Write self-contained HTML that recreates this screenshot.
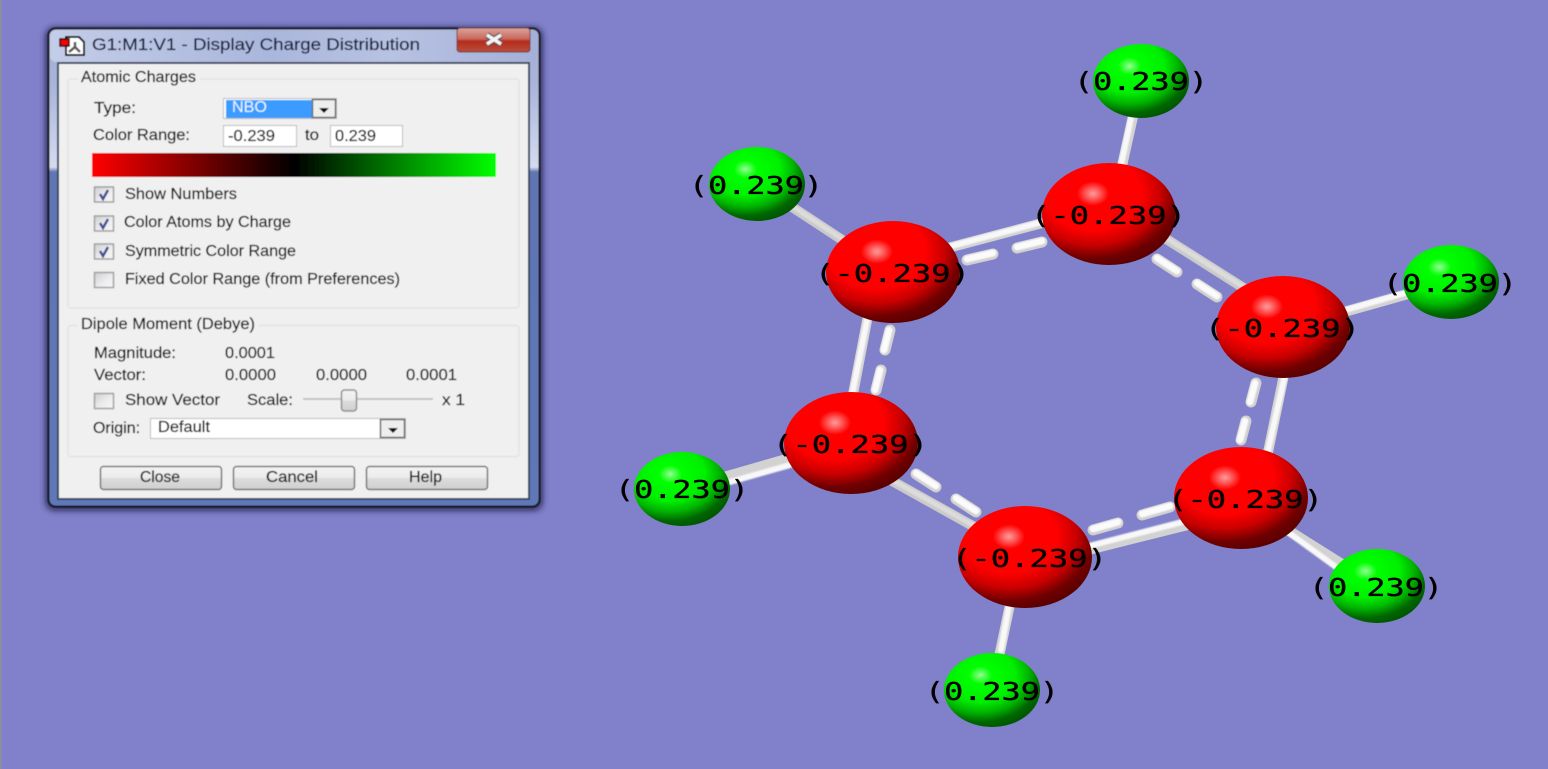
<!DOCTYPE html>
<html><head><meta charset="utf-8"><title>G1:M1:V1 - Display Charge Distribution</title>
<style>
html,body{margin:0;padding:0;background:#8080cb;width:1548px;height:769px;overflow:hidden}
svg{display:block;position:absolute;left:0;top:0}
.t{font-family:"Liberation Sans",sans-serif;font-size:15.5px;fill:#111;stroke:#111;stroke-width:.22}
.l{font-family:"DejaVu Sans Mono","Liberation Mono",monospace;font-size:24.5px;fill:#050000;stroke:#050000;stroke-width:.35}
</style></head><body>
<svg width="1548" height="769" viewBox="0 0 1548 769" xmlns="http://www.w3.org/2000/svg">
<defs>
<radialGradient id="r" cx=".38" cy=".3" r=".8">
<stop offset="0" stop-color="#ff9c9c"/><stop offset=".05" stop-color="#ff6a6a"/><stop offset=".15" stop-color="#f00"/><stop offset=".45" stop-color="#f00"/><stop offset=".63" stop-color="#c80000"/><stop offset=".79" stop-color="#6e0000"/><stop offset=".92" stop-color="#580000"/><stop offset="1" stop-color="#500000"/>
</radialGradient>
<radialGradient id="g" cx=".38" cy=".3" r=".8">
<stop offset="0" stop-color="#9cff9c"/><stop offset=".05" stop-color="#60ff60"/><stop offset=".15" stop-color="#0f0"/><stop offset=".45" stop-color="#00f000"/><stop offset=".63" stop-color="#00b400"/><stop offset=".79" stop-color="#006600"/><stop offset=".92" stop-color="#005400"/><stop offset="1" stop-color="#005000"/>
</radialGradient>
<linearGradient id="bar"><stop offset="0" stop-color="#f00"/><stop offset=".5" stop-color="#000"/><stop offset="1" stop-color="#0f0"/></linearGradient>
<linearGradient id="glass" x1="0" y1="0" x2="0" y2="1">
<stop offset="0" stop-color="#a3aed4"/><stop offset=".12" stop-color="#a9b5da"/><stop offset=".29" stop-color="#d5dcf0"/><stop offset=".3" stop-color="#6076b4"/><stop offset="1" stop-color="#5f78b8"/>
</linearGradient>
<linearGradient id="title" x1="0" y1="0" x2="1" y2="0">
<stop offset="0" stop-color="#c4cde8"/><stop offset=".45" stop-color="#aab6dc"/><stop offset=".7" stop-color="#b8c2e2"/><stop offset="1" stop-color="#a4b0d8"/>
</linearGradient>
<linearGradient id="red" x1="0" y1="0" x2="0" y2="1">
<stop offset="0" stop-color="#dca49c"/><stop offset=".45" stop-color="#c9695e"/><stop offset=".55" stop-color="#b52b1a"/><stop offset="1" stop-color="#b8503e"/>
</linearGradient>
<linearGradient id="btn" x1="0" y1="0" x2="0" y2="1">
<stop offset="0" stop-color="#f4f4f4"/><stop offset=".48" stop-color="#ebebeb"/><stop offset=".52" stop-color="#dcdcdc"/><stop offset="1" stop-color="#cfcfcf"/>
</linearGradient>
<linearGradient id="cb" x1="0" y1="0" x2="1" y2="1">
<stop offset="0" stop-color="#cfcfd4"/><stop offset=".6" stop-color="#eeeeef"/><stop offset="1" stop-color="#f7f7f7"/>
</linearGradient>
<filter id="soft" x="-5%" y="-5%" width="110%" height="110%"><feGaussianBlur stdDeviation=".45"/></filter>
<filter id="sh" x="-10%" y="-10%" width="120%" height="120%"><feGaussianBlur stdDeviation="3.5"/></filter>
<filter id="b1" x="-20%" y="-20%" width="140%" height="140%"><feGaussianBlur stdDeviation=".7"/></filter>
</defs>

<rect x="0" y="0" width="1.5" height="769" fill="#8e9296"/>

<!-- bonds -->
<g fill="none" stroke-linecap="round">
<g stroke="#c9c9c9" stroke-width="10">
<path d="M757 184L850 245"/><path d="M1160 235L1250 292"/><path d="M980 530L885 477"/>
</g>
<g stroke="#dcdcdc" stroke-width="5" filter="url(#b1)">
<path d="M757 183L850 244"/><path d="M1160 234L1250 291"/><path d="M980 529L885 476"/>
</g>
<g stroke="#d2d2d2" stroke-width="10">
<path d="M1141 81L1120 175"/><path d="M1451 282L1330 316"/><path d="M682 489L800 455"/><path d="M1377 586L1280 525"/><path d="M992 690L1012 595"/>
<path d="M948 248L1050 221"/><path d="M1287 360L1266 462"/><path d="M1200 522L1080 552"/><path d="M850 410L870 305"/>
</g>
<g stroke="#f8f8f8" stroke-width="6" filter="url(#b1)">
<path d="M1138 85L1120 170"/><path d="M1405 293L1335 313"/><path d="M790 465L730 482"/><path d="M1010 600L1001 650"/>
<path d="M948 247L1050 220"/><path d="M1286 370L1267 455"/><path d="M1190 520L1085 547"/><path d="M867 320L852 395"/><path d="M1340 570L1285 530"/>
</g>
<g stroke="#cfcfcf" stroke-width="11">
<path d="M967 260L993 254"/><path d="M1017 248L1042 242"/>
<path d="M1157 259L1177 272"/><path d="M1197 284L1217 297"/>
<path d="M1256 383L1251 402"/><path d="M1246 421L1241 440"/>
<path d="M1170 507L1142 515"/><path d="M1118 523L1093 530"/>
<path d="M916 474L936 487"/><path d="M956 499L976 512"/>
<path d="M890 330L885 350"/><path d="M881 370L876 390"/>
</g>
<g stroke="#fbfbfb" stroke-width="7" filter="url(#b1)">
<path d="M967 259L993 253"/><path d="M1017 247L1042 241"/>
<path d="M1157 258L1177 271"/><path d="M1197 283L1217 296"/>
<path d="M1255 383L1250 402"/><path d="M1245 421L1240 440"/>
<path d="M1170 506L1142 514"/><path d="M1118 522L1093 529"/>
<path d="M916 473L936 486"/><path d="M956 498L976 511"/>
<path d="M889 330L884 350"/><path d="M880 370L875 390"/>
</g>
</g>

<!-- atoms -->
<g fill="url(#r)">
<ellipse cx="893" cy="272" rx="67" ry="51"/><ellipse cx="1109" cy="214" rx="67" ry="51"/><ellipse cx="1283" cy="327" rx="67" ry="51"/><ellipse cx="851" cy="443" rx="67" ry="51"/><ellipse cx="1241" cy="498" rx="67" ry="51"/><ellipse cx="1025" cy="557" rx="67" ry="51"/>
</g>
<g fill="url(#g)">
<ellipse cx="757" cy="184" rx="48" ry="37"/><ellipse cx="1141" cy="81" rx="48" ry="37"/><ellipse cx="1451" cy="282" rx="48" ry="37"/><ellipse cx="682" cy="489" rx="48" ry="37"/><ellipse cx="1377" cy="586" rx="48" ry="37"/><ellipse cx="992" cy="690" rx="48" ry="37"/>
</g>

<!-- labels -->
<g>
<text class="l" x="689" y="194" textLength="134" lengthAdjust="spacingAndGlyphs">(0.239)</text>
<text class="l" x="1074" y="90" textLength="134" lengthAdjust="spacingAndGlyphs">(0.239)</text>
<text class="l" x="1383" y="292" textLength="134" lengthAdjust="spacingAndGlyphs">(0.239)</text>
<text class="l" x="615" y="498" textLength="134" lengthAdjust="spacingAndGlyphs">(0.239)</text>
<text class="l" x="1309" y="596" textLength="134" lengthAdjust="spacingAndGlyphs">(0.239)</text>
<text class="l" x="925" y="700" textLength="134" lengthAdjust="spacingAndGlyphs">(0.239)</text>
<text class="l" x="815" y="282" textLength="155" lengthAdjust="spacingAndGlyphs">(-0.239)</text>
<text class="l" x="1031" y="224" textLength="155" lengthAdjust="spacingAndGlyphs">(-0.239)</text>
<text class="l" x="1205" y="337" textLength="155" lengthAdjust="spacingAndGlyphs">(-0.239)</text>
<text class="l" x="773" y="453" textLength="155" lengthAdjust="spacingAndGlyphs">(-0.239)</text>
<text class="l" x="1168" y="508" textLength="155" lengthAdjust="spacingAndGlyphs">(-0.239)</text>
<text class="l" x="952" y="567" textLength="155" lengthAdjust="spacingAndGlyphs">(-0.239)</text>
</g>

<!-- dialog -->
<rect x="46" y="28" width="496" height="482" rx="8" fill="#10102a" opacity=".8" filter="url(#sh)"/>
<g filter="url(#soft)">
<rect x="48.500" y="28.500" width="491" height="478" rx="7" fill="url(#glass)" stroke="#15151c" stroke-width="2"/>
<rect x="50" y="30" width="488" height="32" rx="6" fill="url(#title)"/>
<rect x="457" y="28" width="73" height="24" rx="3" fill="url(#red)" stroke="#6e3b3c"/>
<path d="M487 35L501 44M501 35L487 44" stroke="#4a4a55" stroke-width="6"/>
<path d="M487 35L501 44M501 35L487 44" stroke="#f4f4f4" stroke-width="3.500"/>

<rect x="58" y="63" width="471" height="436" fill="#f0f0f0" stroke="#3c465e" stroke-width="2"/>

<!-- icon -->
<path d="M66 37H79L84 42V55H66Z" fill="#fff" stroke="#000" stroke-width="2"/>
<rect x="60" y="39" width="9" height="7" fill="#f00" stroke="#000" stroke-width="1.500"/>
<path d="M75 42V47M75 47L69 52M75 47L80 52" stroke="#555" stroke-width="2.500" fill="none"/>

<text class="t" x="92" y="50" textLength="328" lengthAdjust="spacingAndGlyphs" style="font-size:16.500px;fill:#13213c;stroke:#13213c">G1:M1:V1 - Display Charge Distribution</text>

<!-- group boxes -->
<rect x="68" y="79" width="451" height="229" rx="3" fill="none" stroke="#dfe4e6" stroke-width="1.500"/>
<rect x="68" y="325.500" width="451" height="131" rx="3" fill="none" stroke="#dfe4e6" stroke-width="1.500"/>
<rect x="78" y="70" width="122" height="16" fill="#f0f0f0"/>
<rect x="78" y="317" width="180" height="16" fill="#f0f0f0"/>
<text class="t" x="81" y="82" textLength="115" lengthAdjust="spacingAndGlyphs">Atomic Charges</text>
<text class="t" x="81" y="329" textLength="174" lengthAdjust="spacingAndGlyphs">Dipole Moment (Debye)</text>

<!-- type -->
<text class="t" x="94" y="113" textLength="42" lengthAdjust="spacingAndGlyphs">Type:</text>
<rect x="223.500" y="98.500" width="113" height="20" fill="#fff" stroke="#bcbcbc"/>
<rect x="226" y="100" width="86" height="18" fill="#3a9bff"/>
<rect x="312.500" y="99.500" width="23" height="18" fill="#eee" stroke="#6a6a6a" stroke-width="1.500"/>
<path d="M319 108H329L324 113Z" fill="#111"/>
<text class="t" x="232" y="112" textLength="35" lengthAdjust="spacingAndGlyphs" style="fill:#eaf4ff;stroke:none">NBO</text>

<!-- range -->
<text class="t" x="93" y="140" textLength="97" lengthAdjust="spacingAndGlyphs">Color Range:</text>
<rect x="223.500" y="125.500" width="73" height="21" fill="#fff" stroke="#bcbcbc"/>
<rect x="330.500" y="125.500" width="72" height="21" fill="#fff" stroke="#bcbcbc"/>
<text class="t" x="228" y="141" textLength="47" lengthAdjust="spacingAndGlyphs">-0.239</text>
<text class="t" x="305" y="140" textLength="14" lengthAdjust="spacingAndGlyphs">to</text>
<text class="t" x="335" y="141" textLength="41" lengthAdjust="spacingAndGlyphs">0.239</text>
<rect x="92" y="153" width="404" height="24" fill="url(#bar)"/>

<!-- checks -->
<g fill="url(#cb)" stroke="#a0a0a0" stroke-width="1.500">
<rect x="94.500" y="187" width="19" height="15"/>
<rect x="94.500" y="216" width="19" height="15"/>
<rect x="94.500" y="244" width="19" height="15"/>
<rect x="94.500" y="272.500" width="19" height="15"/>
<rect x="94.500" y="393.500" width="19" height="15"/>
</g>
<g fill="none" stroke="#3f5090" stroke-width="2.500">
<path d="M100 194L103 199L108 190"/><path d="M100 223L103 228L108 219"/><path d="M100 251L103 256L108 247"/>
</g>
<text class="t" x="125" y="199" textLength="112" lengthAdjust="spacingAndGlyphs">Show Numbers</text>
<text class="t" x="124" y="227" textLength="167" lengthAdjust="spacingAndGlyphs">Color Atoms by Charge</text>
<text class="t" x="125" y="256" textLength="171" lengthAdjust="spacingAndGlyphs">Symmetric Color Range</text>
<text class="t" x="125" y="284" textLength="275" lengthAdjust="spacingAndGlyphs">Fixed Color Range (from Preferences)</text>

<!-- dipole -->
<text class="t" x="94" y="358" textLength="82" lengthAdjust="spacingAndGlyphs">Magnitude:</text>
<text class="t" x="225" y="358" textLength="50" lengthAdjust="spacingAndGlyphs">0.0001</text>
<text class="t" x="94" y="380" textLength="52" lengthAdjust="spacingAndGlyphs">Vector:</text>
<text class="t" x="225" y="380" textLength="51" lengthAdjust="spacingAndGlyphs">0.0000</text>
<text class="t" x="316" y="380" textLength="51" lengthAdjust="spacingAndGlyphs">0.0000</text>
<text class="t" x="406" y="380" textLength="51" lengthAdjust="spacingAndGlyphs">0.0001</text>
<text class="t" x="125" y="405" textLength="95" lengthAdjust="spacingAndGlyphs">Show Vector</text>
<text class="t" x="247" y="405" textLength="46" lengthAdjust="spacingAndGlyphs">Scale:</text>
<rect x="303" y="398" width="130" height="2" fill="#c4c4c4"/>
<rect x="341.500" y="390" width="15" height="21" rx="3" fill="url(#btn)" stroke="#8f8f8f" stroke-width="1.500"/>
<text class="t" x="442" y="405" textLength="23" lengthAdjust="spacingAndGlyphs">x 1</text>

<text class="t" x="93" y="433" textLength="47" lengthAdjust="spacingAndGlyphs">Origin:</text>
<rect x="150.500" y="418.500" width="255" height="20" fill="#fff" stroke="#bcbcbc"/>
<rect x="380.500" y="419.500" width="24" height="18" fill="#eee" stroke="#6a6a6a" stroke-width="1.500"/>
<path d="M388 428H398L393 433Z" fill="#111"/>
<text class="t" x="158" y="432" textLength="52" lengthAdjust="spacingAndGlyphs">Default</text>

<!-- buttons -->
<g fill="url(#btn)" stroke="#777" stroke-width="1.500">
<rect x="100.500" y="466.500" width="121" height="23" rx="3"/>
<rect x="233.500" y="466.500" width="121" height="23" rx="3"/>
<rect x="366.500" y="466.500" width="121" height="23" rx="3"/>
</g>
<text class="t" x="140" y="482" textLength="40" lengthAdjust="spacingAndGlyphs">Close</text>
<text class="t" x="266" y="482" textLength="52" lengthAdjust="spacingAndGlyphs">Cancel</text>
<text class="t" x="409" y="482" textLength="33" lengthAdjust="spacingAndGlyphs">Help</text>
</g>
</svg>
</body></html>
